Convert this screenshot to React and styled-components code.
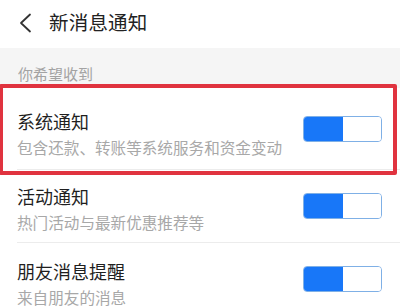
import React from 'react';
import styled, { createGlobalStyle } from 'styled-components';

const GlobalStyle = createGlobalStyle`
  html, body {
    margin: 0;
    padding: 0;
    background: #ffffff;
    font-family: "Noto Sans CJK SC", "Noto Sans", sans-serif;
  }
`;

const items = [
  { title: '系统通知', desc: '包含还款、转账等系统服务和资金变动', shift: 9 },
  { title: '活动通知', desc: '热门活动与最新优惠推荐等', shift: 3 },
  { title: '朋友消息提醒', desc: '来自朋友的消息', shift: 7 },
];

const App = () => {
  return (
    <Page>
      <GlobalStyle />
      <Header>
        <BackIcon viewBox="0 0 14 20" aria-hidden="true">
          <path d="M12 1.5 L3 10 L12 18.5" fill="none" stroke="#333" strokeWidth="1.8" strokeLinecap="round" strokeLinejoin="round" />
        </BackIcon>
        <Title>新消息通知</Title>
      </Header>

      <SectionLabel>你希望收到</SectionLabel>

      <List>
        {items.map((item, i) => (
          <Row key={item.title} first={i === 0}>
            <RowText shift={item.shift}>
              <RowTitle>{item.title}</RowTitle>
              <RowDesc>{item.desc}</RowDesc>
            </RowText>
            <Toggle>
              <ToggleOn />
              <ToggleOff />
            </Toggle>
          </Row>
        ))}
      </List>

      <Highlight />
    </Page>
  );
};

export default App;

const Page = styled.div`
  position: relative;
  width: 400px;
  height: 307px;
  overflow: hidden;
  background: #ffffff;
`;

const Header = styled.div`
  height: 48px;
  display: flex;
  align-items: center;
  padding-left: 18px;
  box-sizing: border-box;
  background: #ffffff;
`;

const BackIcon = styled.svg`
  width: 14px;
  height: 20px;
  margin-top: -2px;
`;

const Title = styled.h1`
  margin: -4px 0 0 17px;
  font-size: 19.5px;
  font-weight: 400;
  color: #222;
  letter-spacing: 0.2px;
  line-height: 1;
`;

const SectionLabel = styled.div`
  height: 40px;
  box-sizing: border-box;
  padding: 17px 0 0 18px;
  background: #f5f5f5;
  font-size: 15px;
  line-height: 18px;
  color: #a3a3a3;
`;

const List = styled.div`
  background: #ffffff;
`;

const Row = styled.div`
  height: ${({ first }) => (first ? '82px' : '73px')};
  margin-left: 17px;
  padding-right: 18px;
  display: flex;
  align-items: center;
  justify-content: space-between;
  border-bottom: 1px solid #ececec;
  box-sizing: border-box;
`;

const RowText = styled.div`
  display: flex;
  flex-direction: column;
  gap: 6px;
  padding-top: ${({ shift }) => shift}px;
`;

const RowTitle = styled.div`
  font-size: 18px;
  line-height: 22px;
  color: #1f1f1f;
`;

const RowDesc = styled.div`
  font-size: 15.6px;
  line-height: 18px;
  color: #a8a8a8;
`;

const Toggle = styled.div`
  width: 79px;
  height: 26px;
  display: flex;
  border: 1px solid #7fb0e6;
  border-radius: 4px;
  overflow: hidden;
  box-sizing: border-box;
`;

const ToggleOn = styled.div`
  width: 39px;
  background: #1877f8;
`;

const ToggleOff = styled.div`
  flex: 1;
  background: #ffffff;
`;

const Highlight = styled.div`
  position: absolute;
  left: -1px;
  top: 84px;
  width: 398px;
  height: 91px;
  border: 4px solid #e0333f;
  border-radius: 2px;
  box-sizing: border-box;
  pointer-events: none;
`;
